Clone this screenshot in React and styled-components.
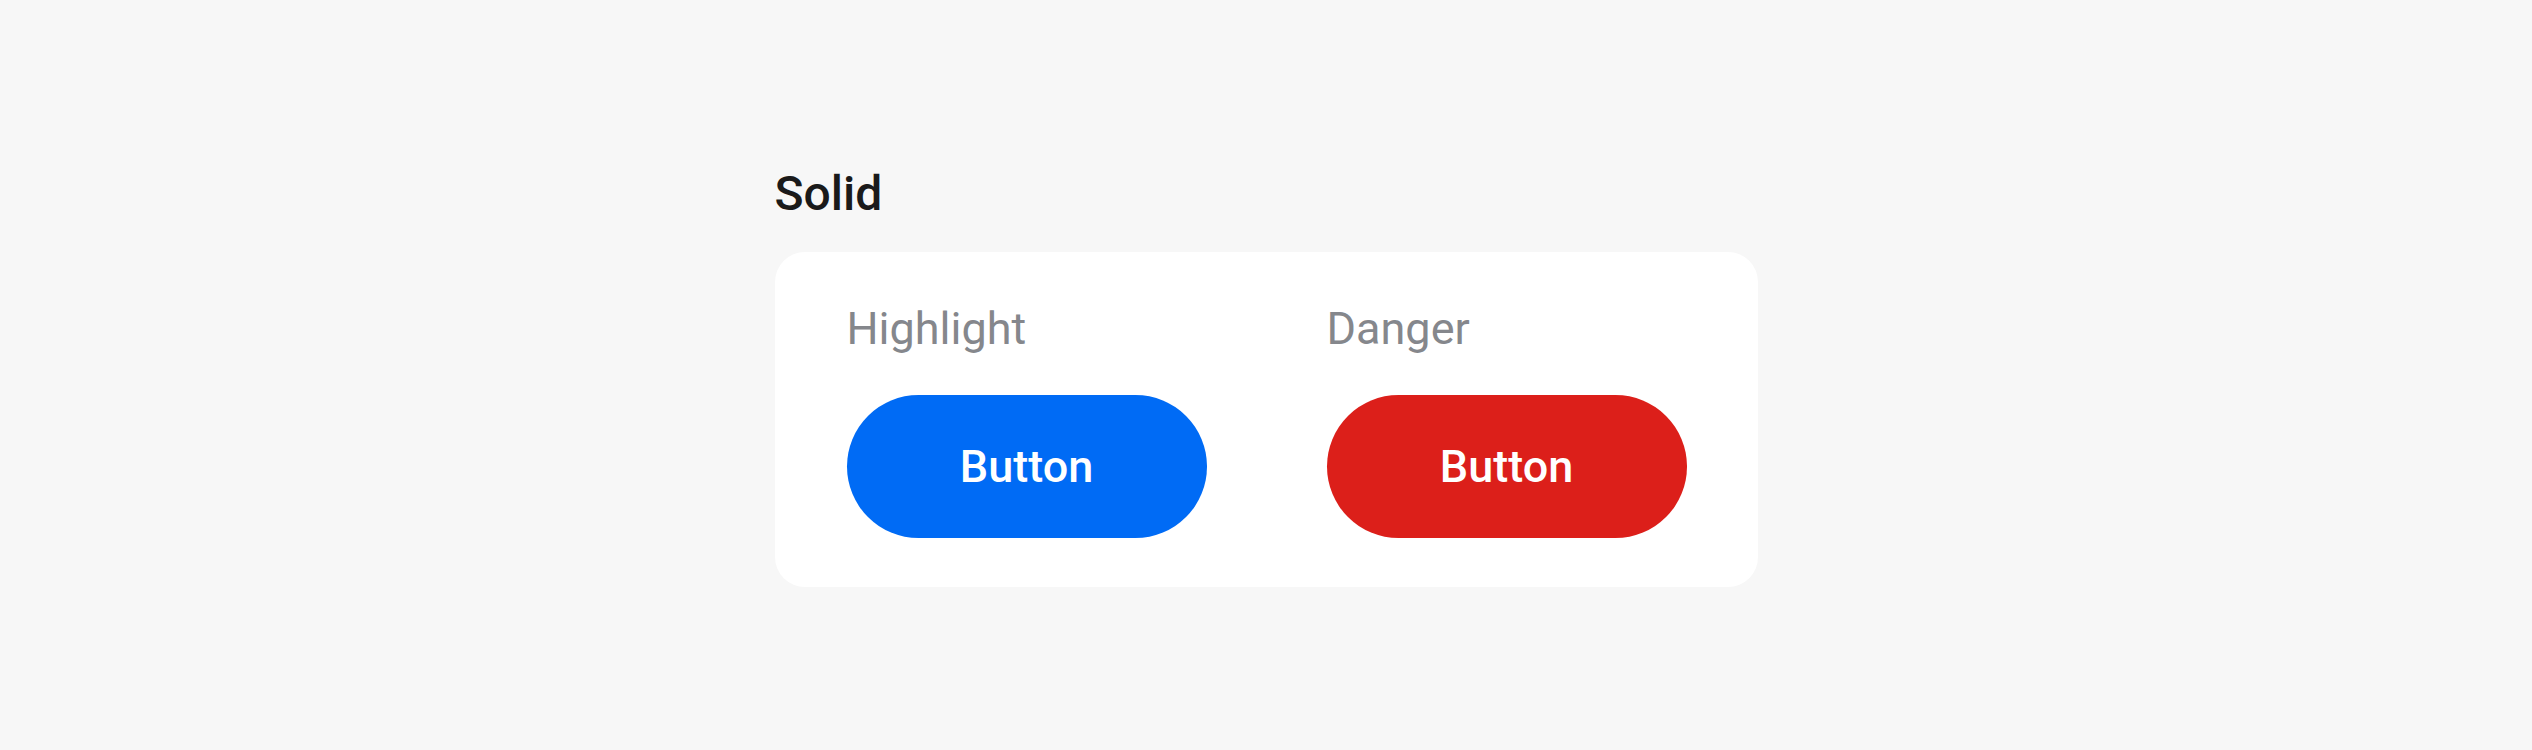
import styled, { createGlobalStyle } from "styled-components";

const GlobalStyle = createGlobalStyle`
  html, body {
    margin: 0;
    padding: 0;
    background: #f7f7f7;
  }
  body {
    font-family: Roboto, "Liberation Sans", sans-serif;
  }
`;

const variants = [
  { label: "Highlight", color: "#006bf5" },
  { label: "Danger", color: "#dc1f1a" },
];

function App() {
  return (
    <>
      <GlobalStyle />
      <Page>
        <Section>
          <Title>Solid</Title>
          <Card>
            {variants.map((v) => (
              <Column key={v.label}>
                <Label>{v.label}</Label>
                <Button $bg={v.color}>Button</Button>
              </Column>
            ))}
          </Card>
        </Section>
      </Page>
    </>
  );
}

export default App;

const Page = styled.div`
  display: flex;
  align-items: center;
  justify-content: center;
  box-sizing: border-box;
  min-height: 100vh;
  padding-bottom: 3px;
`;

const Section = styled.div`
  display: flex;
  flex-direction: column;
  gap: 25px;
`;

const Title = styled.div`
  color: #1a1a1a;
  font-size: 48px;
  font-weight: 500;
  line-height: 66px;
`;

const Card = styled.div`
  display: flex;
  flex-direction: row;
  gap: 120px;
  padding: 50px 71px 49px 72px;
  border-radius: 30px;
  background: #fff;
`;

const Column = styled.div`
  display: flex;
  flex-direction: column;
  gap: 39px;
`;

const Label = styled.div`
  color: #85878c;
  font-size: 45px;
  font-weight: 400;
  line-height: 54px;
`;

const Button = styled.button`
  display: flex;
  align-items: center;
  justify-content: center;
  width: 360px;
  height: 143px;
  padding: 0;
  border: none;
  border-radius: 72px;
  background: ${(p) => p.$bg};
  color: #fff;
  font-family: Roboto, "Liberation Sans", sans-serif;
  font-size: 45px;
  font-weight: 500;
  cursor: pointer;
`;
